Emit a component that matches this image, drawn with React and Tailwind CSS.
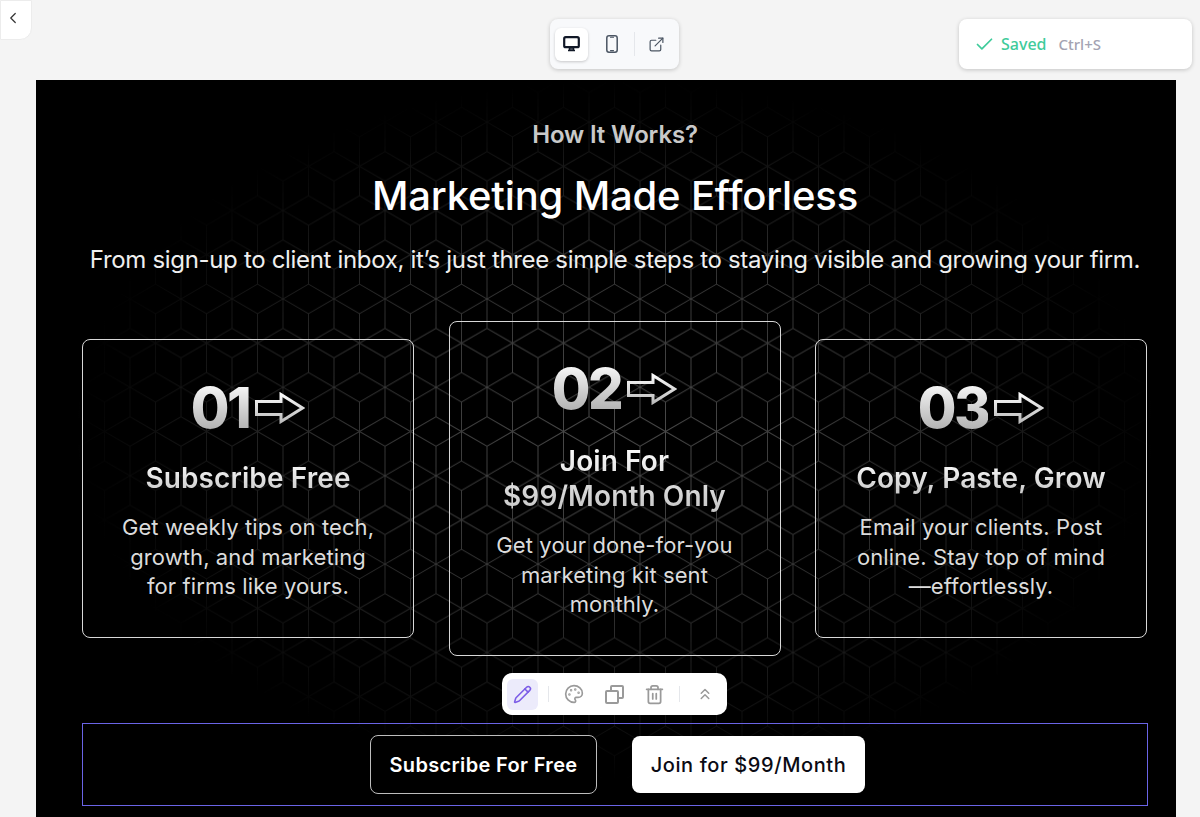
import React from "react";
import { ChevronLeft, Check, ExternalLink, Pencil, Palette, Trash2, ChevronsUp } from "lucide-react";

const steps = [
  {
    num: "01",
    title: ["Subscribe Free"],
    body: ["Get weekly tips on tech,", "growth, and marketing", "for firms like yours."],
    box: "h-[299px] mt-[18px] pt-[38px]",
    titleGap: "mt-[23px]",
  },
  {
    num: "02",
    title: ["Join For", "$99/Month Only"],
    body: ["Get your done-for-you", "marketing kit sent", "monthly."],
    box: "h-[335px] pt-[37px]",
    titleGap: "mt-[25px]",
  },
  {
    num: "03",
    title: ["Copy, Paste, Grow"],
    body: ["Email your clients. Post", "online. Stay top of mind", "—effortlessly."],
    box: "h-[299px] mt-[18px] pt-[38px]",
    titleGap: "mt-[23px]",
  },
];

// rhombille lines: six spokes out of every lattice point of the 51 x 88.4 tile
const lattice = [[0, 0], [51, 0], [0, 88.4], [51, 88.4], [25.5, 44.2]];
const spokes = [[0, 29.47], [0, -29.47], [25.5, 14.73], [25.5, -14.73], [-25.5, 14.73], [-25.5, -14.73]];
const tilePath = lattice
  .flatMap(([x, y]) => spokes.map(([dx, dy]) => `M${x} ${y}L${x + dx} ${y + dy}`))
  .join("");

const CubePattern = () => (
  <svg className="absolute inset-0 h-full w-full" xmlns="http://www.w3.org/2000/svg">
    <defs>
      <pattern id="cubes" x="43" y="42.1" width="51" height="88.4" patternUnits="userSpaceOnUse">
        <path d={tilePath} fill="none" stroke="#ffffff" strokeWidth="1" />
      </pattern>
      <radialGradient
        id="fade"
        gradientUnits="userSpaceOnUse"
        cx="0"
        cy="0"
        r="1"
        gradientTransform="translate(579 350) scale(540 350)"
      >
        <stop offset="0" stopColor="#fff" stopOpacity="0.3" />
        <stop offset="0.5" stopColor="#fff" stopOpacity="0.2" />
        <stop offset="1" stopColor="#fff" stopOpacity="0" />
      </radialGradient>
      <mask id="fadeMask" maskUnits="userSpaceOnUse" x="0" y="0" width="1140" height="737">
        <rect width="1140" height="737" fill="url(#fade)" />
      </mask>
    </defs>
    <rect width="1140" height="737" fill="url(#cubes)" mask="url(#fadeMask)" />
  </svg>
);

const ArrowOutline = () => (
  <svg width="50" height="32" viewBox="0 0 50 32" fill="none">
    <defs>
      <linearGradient id="arrowFill" gradientUnits="userSpaceOnUse" x1="0" y1="0" x2="0" y2="32">
        <stop offset="0" stopColor="#ffffff" />
        <stop offset="1" stopColor="#b8b8b8" />
      </linearGradient>
    </defs>
    <path d="M1.5 9.5 H26 V2.5 L47.5 16 L26 29.5 V22.5 H1.5 Z" stroke="url(#arrowFill)" strokeWidth="3" />
  </svg>
);

const DesktopIcon = () => (
  <svg width="17" height="16" viewBox="0 0 17 16" fill="none">
    <rect x="1.2" y="1.2" width="14.6" height="10" rx="1.5" stroke="#111827" strokeWidth="2.2" />
    <path d="M5 14.5h7M6.5 12h4v2h-4z" stroke="#111827" strokeWidth="1.5" />
  </svg>
);

const PhoneIcon = () => (
  <svg width="12" height="18" viewBox="0 0 12 18" fill="none" stroke="#4b5563" strokeWidth="1.5">
    <rect x="0.8" y="0.8" width="10.4" height="16.4" rx="2.2" />
    <path d="M4.5 2.2h3M4.5 15.6h3" strokeLinecap="round" strokeWidth="1.1" />
  </svg>
);

const DuplicateIcon = () => (
  <svg width="19" height="19" viewBox="0 0 19 19" fill="none" stroke="#9a9a9a" strokeWidth="2">
    <rect x="1" y="6" width="12" height="12" rx="1" />
    <path d="M6 6V2a1 1 0 0 1 1-1h10a1 1 0 0 1 1 1v10a1 1 0 0 1-1 1h-4" />
  </svg>
);

const Step = ({ step }) => (
  <div className={`w-[332px] shrink-0 rounded-lg border border-[#d8d8d8] flex flex-col items-center text-center ${step.box}`}>
    <div className="flex items-center gap-[6px] h-[60px]">
      <span className="text-[56px] leading-none font-extrabold tracking-[-2.5px] bg-gradient-to-b from-white to-[#a8a8a8] bg-clip-text text-transparent">
        {step.num}
      </span>
      <ArrowOutline />
    </div>
    <div className={`${step.titleGap} text-[28px] leading-[35px] font-semibold tracking-[0.1px] bg-gradient-to-b from-white to-[#c4c4c4] bg-clip-text text-transparent`}>
      {step.title.map((line) => (
        <div key={line}>{line}</div>
      ))}
    </div>
    <div className="mt-[17px] text-[22px] leading-[29.5px] text-[#dcdcdc] tracking-[0.1px]">
      {step.body.map((line) => (
        <div key={line}>{line}</div>
      ))}
    </div>
  </div>
);

export default function App() {
  return (
    <div className="relative h-[817px] w-[1200px] overflow-hidden bg-[#f4f4f4] font-['Inter',sans-serif]">
      {/* back tab */}
      <div className="absolute left-0 top-0 flex h-10 w-[32px] items-center justify-center rounded-br-xl border border-[#ececec] bg-white">
        <ChevronLeft size={18} className="text-[#333333] mr-[7px] -mt-[4px]" strokeWidth={1.6} />
      </div>

      {/* device switcher */}
      <div className="absolute left-[550px] top-[19px] flex h-[50px] w-[129px] items-center rounded-lg bg-[#f8f9fb] pl-[5px] shadow-[0_1px_4px_rgba(0,0,0,0.2)]">
        <div className="flex h-[33px] w-[33px] items-center justify-center rounded-md bg-white shadow-[0_1px_3px_rgba(0,0,0,0.2)]">
          <DesktopIcon />
        </div>
        <div className="ml-[8px] flex w-[32px] justify-center">
          <PhoneIcon />
        </div>
        <div className="ml-[6px] h-6 w-px bg-[#e5e7eb]" />
        <div className="ml-[13px] text-[#4b5563]">
          <ExternalLink size={17} strokeWidth={1.7} />
        </div>
      </div>

      {/* saved */}
      <div className="absolute left-[959px] top-[19px] flex h-[50px] w-[233px] items-center rounded-lg bg-white pl-[15px] shadow-[0_1px_4px_rgba(0,0,0,0.2)] font-['Noto_Sans',sans-serif]">
        <Check size={21} className="text-[#3fcb9b]" strokeWidth={2} />
        <span className="ml-[6px] text-[16px] font-medium text-[#3fcb9b]">Saved</span>
        <span className="ml-[12px] text-[15px] font-medium text-[#a3a3b2]">Ctrl+S</span>
      </div>

      {/* section */}
      <div className="absolute left-[36px] top-[80px] h-[737px] w-[1140px] overflow-hidden bg-black">
        <CubePattern />
        <div className="relative ml-[46px] flex w-[1066px] flex-col items-center">
          <div className="mt-[39px] text-[24px] leading-[32px] font-semibold tracking-[-0.14px] text-[#c9c9c9]">How It Works?</div>
          <h1 className="mt-[19px] text-[40px] leading-[52px] font-medium tracking-[-0.17px] text-white">Marketing Made Efforless</h1>
          <p className="mt-[22px] whitespace-nowrap text-[24px] leading-[32px] tracking-[-0.33px] text-[#efefef]">
            From sign-up to client inbox, it’s just three simple steps to staying visible and growing your firm.
          </p>

          <div className="mt-[45px] flex w-[1065px] items-start justify-between self-start">
            {steps.map((step) => (
              <Step key={step.num} step={step} />
            ))}
          </div>

          <div className="mt-[67px] flex h-[83px] w-[1066px] items-center justify-center gap-[35px] border border-[#6a64e6] pl-[5px]">
            <button className="h-[59px] w-[227px] rounded-lg border border-[#bdbdbd] bg-black text-[20px] font-semibold tracking-[0.35px] text-white">
              Subscribe For Free
            </button>
            <button className="h-[57px] w-[233px] rounded-lg bg-white text-[20px] font-medium tracking-[0.6px] text-[#0b0b14]">
              Join for $99/Month
            </button>
          </div>
        </div>
      </div>

      {/* floating toolbar */}
      <div className="absolute left-[502px] top-[673px] flex h-[42px] w-[225px] items-center rounded-[10px] bg-white pl-[5px] text-[#9a9a9a]">
        <div className="flex h-[31px] w-[31px] items-center justify-center rounded-md bg-[#ecebfb]">
          <Pencil size={19} className="text-[#7c5ce7]" strokeWidth={2} />
        </div>
        <div className="ml-[10px] h-[16px] w-px bg-[#e5e7eb]" />
        <Palette size={20} className="ml-[15px]" strokeWidth={2} />
        <div className="ml-[21px]">
          <DuplicateIcon />
        </div>
        <Trash2 size={21} className="ml-[20px]" strokeWidth={2} />
        <div className="ml-[14px] h-[16px] w-px bg-[#e5e7eb]" />
        <ChevronsUp size={18} className="ml-[16px]" strokeWidth={2} />
      </div>
    </div>
  );
}
